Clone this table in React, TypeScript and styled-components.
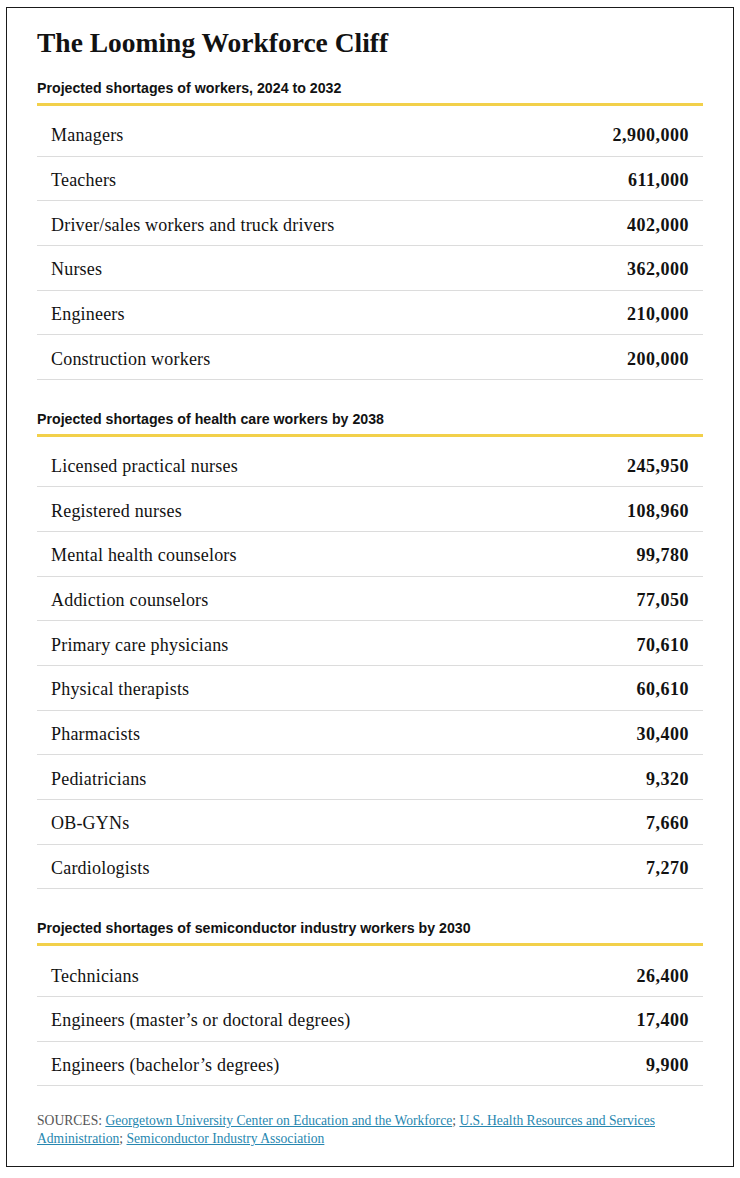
import React from "react";
import styled, { createGlobalStyle } from "styled-components";

const GlobalStyle = createGlobalStyle`
  body {
    margin: 0;
    background: #ffffff;
  }
`;

const Frame = styled.div`
  margin: 7px 6px;
  width: 728px;
  box-sizing: border-box;
  border: 1px solid #1a1a1a;
  padding: 18px 30px 18px 30px;
  color: #121212;
`;

const Title = styled.h1`
  margin: 0;
  font-family: "Liberation Serif", serif;
  font-weight: 700;
  font-size: 27.5px;
  line-height: 34px;
`;

const SectionHeader = styled.h2<{ $first?: boolean }>`
  margin: ${(p) => (p.$first ? "19px" : "30px")} 0 0;
  padding-bottom: 6px;
  border-bottom: 3px solid #f2d04a;
  font-family: "Liberation Sans", sans-serif;
  font-weight: 700;
  font-size: 14.2px;
  line-height: 18px;
`;

const List = styled.div`
  display: flex;
  flex-direction: column;
  padding-top: 6px;
`;

const Row = styled.div`
  display: flex;
  justify-content: space-between;
  align-items: center;
  height: 44.65px;
  box-sizing: border-box;
  padding: 4px 14px 0;
  border-bottom: 1px solid #dcdcdc;
`;

const Label = styled.span`
  font-family: "Liberation Serif", serif;
  font-size: 18px;
  letter-spacing: 0.2px;
`;

const Value = styled.span`
  font-family: "Liberation Serif", serif;
  font-weight: 700;
  font-size: 18px;
  letter-spacing: 0.5px;
`;

const Sources = styled.p`
  margin: 26px 0 0;
  font-family: "Liberation Serif", serif;
  font-size: 13.6px;
  line-height: 18px;
  color: #555555;

  a {
    color: #2787b0;
    text-decoration: underline;
    text-underline-offset: 1px;
  }
`;

type Item = [string, string];

const sections: { title: string; items: Item[] }[] = [
  {
    title: "Projected shortages of workers, 2024 to 2032",
    items: [
      ["Managers", "2,900,000"],
      ["Teachers", "611,000"],
      ["Driver/sales workers and truck drivers", "402,000"],
      ["Nurses", "362,000"],
      ["Engineers", "210,000"],
      ["Construction workers", "200,000"],
    ],
  },
  {
    title: "Projected shortages of health care workers by 2038",
    items: [
      ["Licensed practical nurses", "245,950"],
      ["Registered nurses", "108,960"],
      ["Mental health counselors", "99,780"],
      ["Addiction counselors", "77,050"],
      ["Primary care physicians", "70,610"],
      ["Physical therapists", "60,610"],
      ["Pharmacists", "30,400"],
      ["Pediatricians", "9,320"],
      ["OB-GYNs", "7,660"],
      ["Cardiologists", "7,270"],
    ],
  },
  {
    title: "Projected shortages of semiconductor industry workers by 2030",
    items: [
      ["Technicians", "26,400"],
      ["Engineers (master’s or doctoral degrees)", "17,400"],
      ["Engineers (bachelor’s degrees)", "9,900"],
    ],
  },
];

export default function App() {
  return (
    <>
      <GlobalStyle />
      <Frame>
        <Title>The Looming Workforce Cliff</Title>
        {sections.map((s, i) => (
          <section key={s.title}>
            <SectionHeader $first={i === 0}>{s.title}</SectionHeader>
            <List>
              {s.items.map(([label, value]) => (
                <Row key={label}>
                  <Label>{label}</Label>
                  <Value>{value}</Value>
                </Row>
              ))}
            </List>
          </section>
        ))}
        <Sources>
          SOURCES: <a href="#">Georgetown University Center on Education and the Workforce</a>;{" "}
          <a href="#">U.S. Health Resources and Services Administration</a>;{" "}
          <a href="#">Semiconductor Industry Association</a>
        </Sources>
      </Frame>
    </>
  );
}
